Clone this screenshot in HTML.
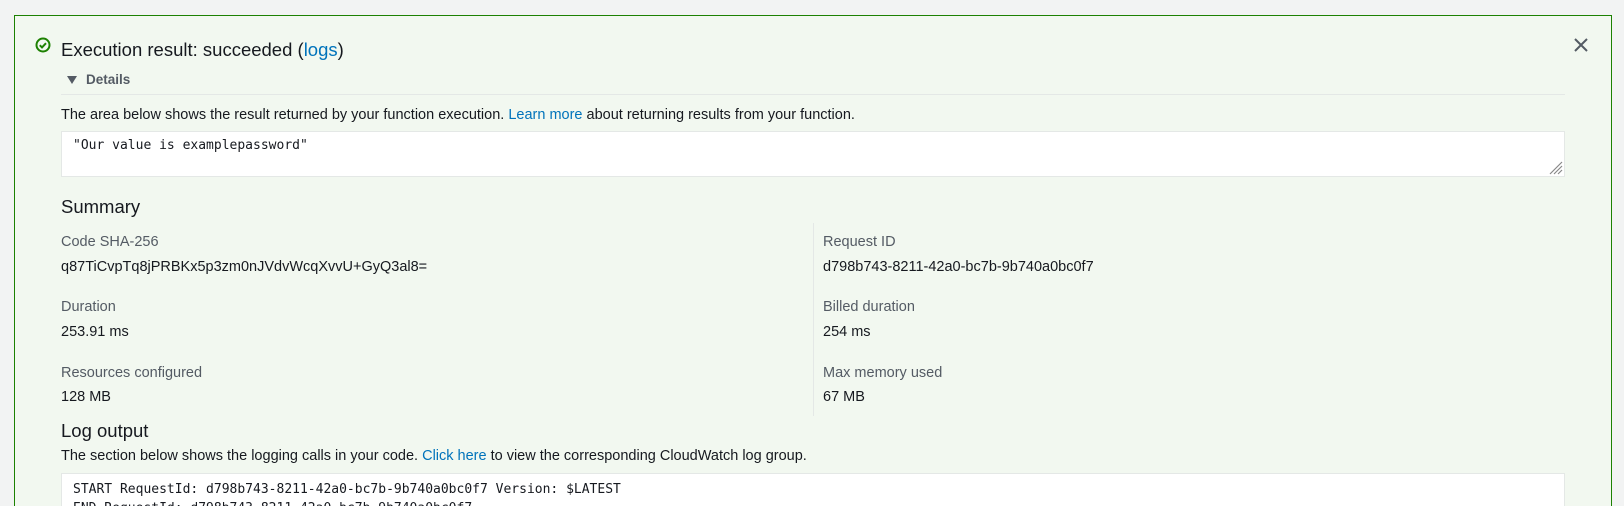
<!DOCTYPE html>
<html><head><style>
html,body{margin:0;width:1624px;height:506px;overflow:hidden}
body{background:#f2f3f3;font-family:"Liberation Sans",sans-serif;color:#16191f;position:relative}
.box{position:absolute;left:14px;top:15px;width:1598px;height:500px;border:1px solid #1d8102;background:#f2f8f0;box-sizing:border-box}
.a{position:absolute;white-space:nowrap}
a{color:#0073bb;text-decoration:none}
.mono{font-family:"DejaVu Sans Mono","Liberation Mono",monospace;font-size:13px}
.lbl{color:#545b64;font-size:14.5px}
.val{font-size:14.5px}
</style></head><body>
<div class="box"></div>
<svg class="a" style="left:35px;top:37px" width="16" height="16" viewBox="0 0 16 16"><circle cx="8" cy="8" r="6.5" fill="none" stroke="#1d8102" stroke-width="2"/><path d="M4.8 8.2l2.2 2.2 4-4.2" fill="none" stroke="#1d8102" stroke-width="2"/></svg>
<div class="a" style="left:61px;top:39px;font-size:18.5px">Execution result: succeeded (<a>logs</a>)</div>
<svg class="a" style="left:1574px;top:38px" width="14" height="14" viewBox="0 0 14 14"><path d="M1 1L13 13M13 1L1 13" stroke="#545b64" stroke-width="2"/></svg>
<svg class="a" style="left:67px;top:76px" width="10" height="8"><path d="M0 0H10L5 8Z" fill="#545b64"/></svg>
<div class="a" style="left:86px;top:72px;font-size:13.5px;font-weight:bold;color:#545b64">Details</div>
<div class="a" style="left:61px;top:94px;width:1504px;height:1px;background:#e4e8e6"></div>
<div class="a" style="left:61px;top:107px;font-size:14.5px">The area below shows the result returned by your function execution. <a>Learn more</a> about returning results from your function.</div>
<div class="a" style="left:61px;top:131px;width:1504px;height:46px;background:#fff;border:1px solid #e4e8e6;box-sizing:border-box"></div>
<div class="a mono" style="left:73px;top:138px">"Our value is examplepassword"</div>
<svg class="a" style="left:1549px;top:161px" width="14" height="14"><path d="M13 1L1 13M13 5L5 13M13 9L9 13" stroke="#888" stroke-width="1.2"/></svg>
<div class="a" style="left:61px;top:196px;font-size:18.5px">Summary</div>
<div class="a" style="left:813px;top:223px;width:1px;height:193px;background:#e4e8e6"></div>
<div class="a lbl" style="left:61px;top:234px">Code SHA-256</div>
<div class="a val" style="left:61px;top:259px">q87TiCvpTq8jPRBKx5p3zm0nJVdvWcqXvvU+GyQ3al8=</div>
<div class="a lbl" style="left:823px;top:234px">Request ID</div>
<div class="a val" style="left:823px;top:259px">d798b743-8211-42a0-bc7b-9b740a0bc0f7</div>
<div class="a lbl" style="left:61px;top:299px">Duration</div>
<div class="a val" style="left:61px;top:324px">253.91 ms</div>
<div class="a lbl" style="left:823px;top:299px">Billed duration</div>
<div class="a val" style="left:823px;top:324px">254 ms</div>
<div class="a lbl" style="left:61px;top:365px">Resources configured</div>
<div class="a val" style="left:61px;top:389px">128 MB</div>
<div class="a lbl" style="left:823px;top:365px">Max memory used</div>
<div class="a val" style="left:823px;top:389px">67 MB</div>
<div class="a" style="left:61px;top:420px;font-size:18.5px">Log output</div>
<div class="a" style="left:61px;top:448px;font-size:14.5px">The section below shows the logging calls in your code. <a>Click here</a> to view the corresponding CloudWatch log group.</div>
<div class="a" style="left:61px;top:473px;width:1504px;height:40px;background:#fff;border:1px solid #e4e8e6;box-sizing:border-box"></div>
<div class="a mono" style="left:73px;top:480px;line-height:19px">START RequestId: d798b743-8211-42a0-bc7b-9b740a0bc0f7 Version: $LATEST<br>END RequestId: d798b743-8211-42a0-bc7b-9b740a0bc0f7</div>
</body></html>
